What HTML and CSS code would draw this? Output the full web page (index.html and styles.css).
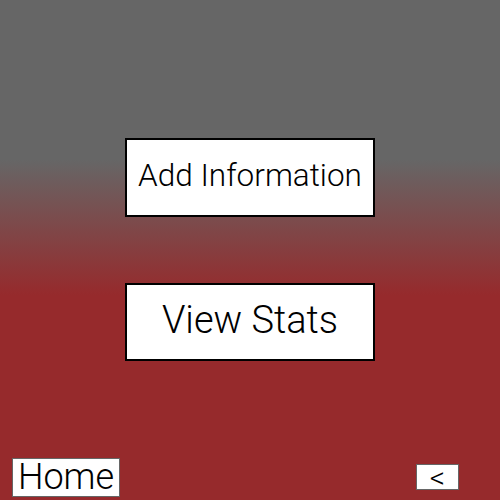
FILE: index.html
```html
<!DOCTYPE html>
<html>
<head>
<meta charset="utf-8">
<link rel="stylesheet" href="styles.css">
</head>
<body>
<div class="page">
  <main class="menu">
    <button class="menu-btn add">Add Information</button>
    <button class="menu-btn stats">View Stats</button>
  </main>
  <footer class="footer">
    <button class="home">Home</button>
    <button class="back"><span class="back-glyph">&lt;</span></button>
  </footer>
</div>
</body>
</html>
```
FILE: styles.css
```css
html, body {
  margin: 0;
  padding: 0;
  height: 100%;
}
body {
  font-family: Roboto, "Liberation Sans", sans-serif;
  background: linear-gradient(to bottom, #666666 0%, #666666 32%, #962a2c 59%, #962a2c 100%);
}
.page {
  height: 500px;
  display: flex;
  flex-direction: column;
  box-sizing: border-box;
}
.menu {
  display: flex;
  flex-direction: column;
  align-items: center;
  padding-top: 138px;
  gap: 66px;
  flex: 1;
}
.menu-btn {
  width: 250px;
  height: 79px;
  background: #fff;
  border: 2px solid #000;
  font-family: Roboto, sans-serif;
  font-weight: 300;
  color: #000;
  padding: 0 0 4px 0;
  margin: 0;
  line-height: 1;
}
.add { font-size: 31.5px; }
.stats { font-size: 38px; height: 78px; }
.footer {
  display: flex;
  justify-content: space-between;
  align-items: flex-end;
  padding: 0 41px 3px 12px;
}
.home {
  width: 108px;
  height: 39px;
  background: #fff;
  border: 1px solid #666;
  font-family: Roboto, sans-serif;
  font-weight: 300;
  font-size: 36px;
  color: #000;
  padding: 0 0 1px 0;
  margin: 0;
  line-height: 1;
}
.back {
  width: 43px;
  height: 26px;
  background: #fff;
  border: 1px solid #666;
  padding: 0;
  margin: 0 0 7px 0;
  display: flex;
  align-items: center;
  justify-content: center;
}
.back-glyph {
  font-family: Roboto, sans-serif;
  font-weight: 300;
  font-size: 30px;
  line-height: 24px;
  height: 24px;
  color: #000;
  display: block;
  margin-top: 2px;
}
```
